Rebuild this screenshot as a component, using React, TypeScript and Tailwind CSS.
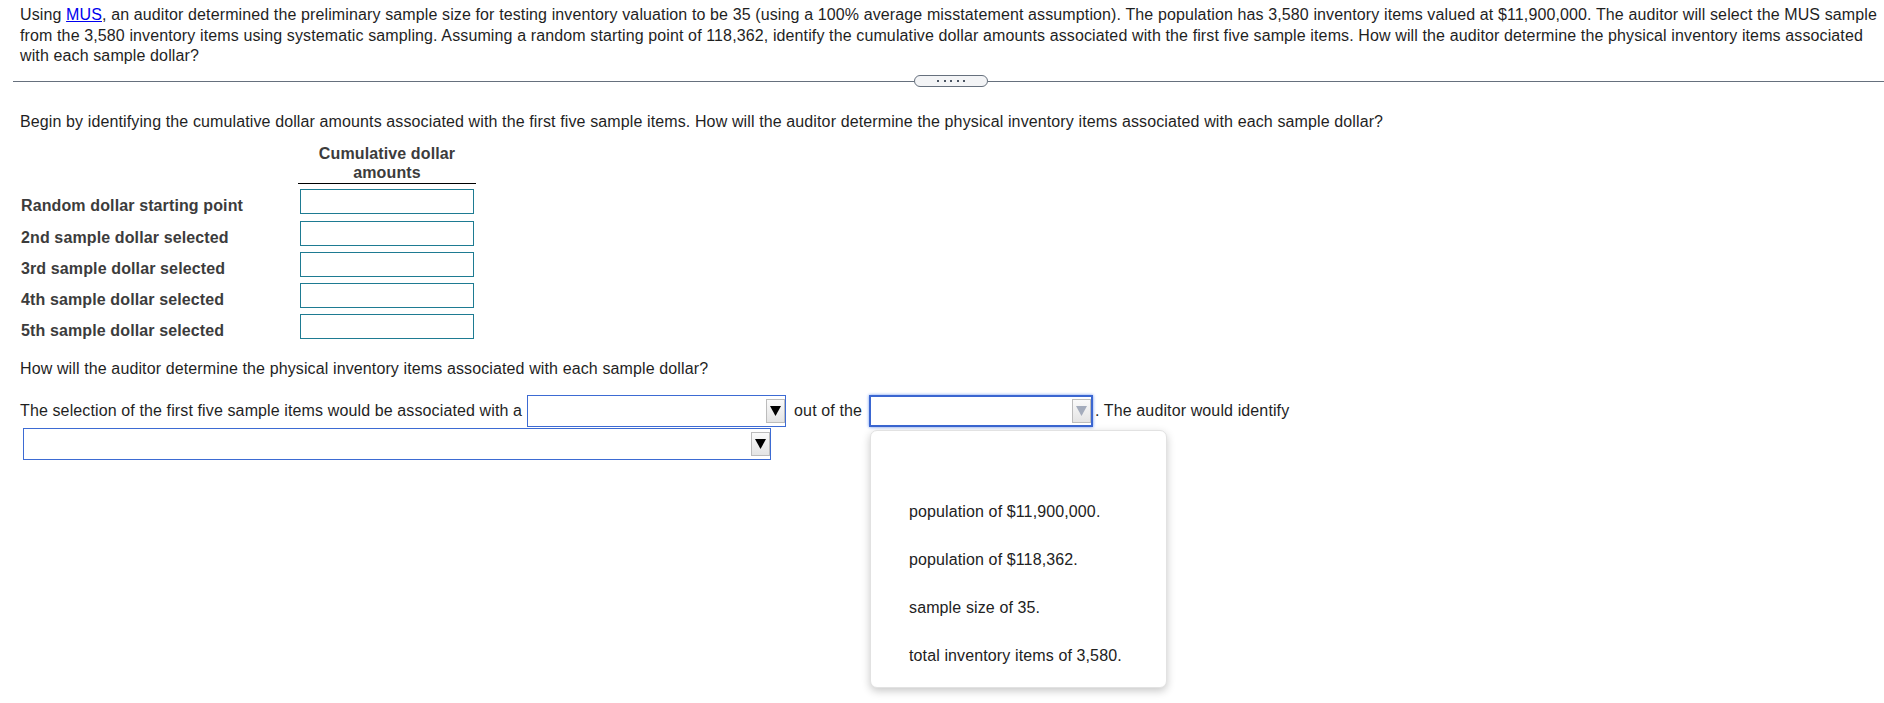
import type { ReactNode } from 'react';

const labels = [
  'Random dollar starting point',
  '2nd sample dollar selected',
  '3rd sample dollar selected',
  '4th sample dollar selected',
  '5th sample dollar selected',
];

const options = [
  'population of $11,900,000.',
  'population of $118,362.',
  'sample size of 35.',
  'total inventory items of 3,580.',
];

function Arrow({ muted = false }: { muted?: boolean }) {
  return (
    <div className="flex h-[24px] w-[19px] items-center justify-center border border-[#bcbcbc] bg-gradient-to-b from-[#fafafa] to-[#e4e4e4]">
      <svg width="11" height="10" viewBox="0 0 11 10">
        <polygon points="0,0 11,0 5.5,10" fill={muted ? '#a4acbc' : '#000'} />
      </svg>
    </div>
  );
}

function Select({ width, focused = false, children }: { width: string; focused?: boolean; children?: ReactNode }) {
  return (
    <div className="relative">
      <div
        className={`flex h-[32px] items-center justify-end bg-white ${width} ${
          focused
            ? 'border-2 border-[#3a66d1] shadow-[0_0_3px_#6b93ee]'
            : 'border border-[#3d6bd3]'
        }`}
      >
        <Arrow muted={focused} />
      </div>
      {children}
    </div>
  );
}

export default function App() {
  return (
    <div className="min-h-[703px] bg-white pr-[4px] pl-[20px] font-['Liberation_Sans',Arial,sans-serif] text-[16px] tracking-[0.12px] text-[#1f1f1f]">
      <p className="pt-[5px] leading-[20.5px]">
        Using <span className="text-[#0000ee] underline">MUS</span>, an auditor determined the preliminary sample
        size for testing inventory valuation to be 35 (using a 100% average misstatement assumption). The population
        has 3,580 inventory items valued at $11,900,000. The auditor will select the MUS sample from the 3,580
        inventory items using systematic sampling. Assuming a random starting point of 118,362, identify the
        cumulative dollar amounts associated with the first five sample items. How will the auditor determine the
        physical inventory items associated with each sample dollar?
      </p>

      <div className="mt-[8.5px] -mr-[4px] ml-[-7px] flex h-[12px] items-center">
        <div className="h-px w-[901px] bg-[#66707d]" />
        <div className="flex h-[12px] w-[74px] items-center justify-center gap-[4.5px] rounded-full border border-[#66707d] bg-[#f3f4f6]">
          <span className="h-[2px] w-[2px] bg-[#4b5563]" />
          <span className="h-[2px] w-[2px] bg-[#4b5563]" />
          <span className="h-[2px] w-[2px] bg-[#4b5563]" />
          <span className="h-[2px] w-[2px] bg-[#4b5563]" />
          <span className="h-[2px] w-[2px] bg-[#4b5563]" />
        </div>
        <div className="h-px flex-1 bg-[#66707d]" />
      </div>

      <p className="mt-[25px] leading-[20.5px]">
        Begin by identifying the cumulative dollar amounts associated with the first five sample items. How will the
        auditor determine the physical inventory items associated with each sample dollar?
      </p>

      <div className="mt-[11px] ml-[278px] w-[178px] border-b border-black pb-[1px] text-center font-bold leading-[19.4px] text-[#3c3c3c]">
        Cumulative dollar
        <br />
        amounts
      </div>

      <div className="mt-[5px] flex flex-col">
        {labels.map(label => (
          <div key={label} className="flex h-[31.2px] items-start">
            <div className="mt-[7px] w-[280px] pl-[1px] font-bold leading-[20px] text-[#3c3c3c]">{label}</div>
            <div className="h-[25px] w-[174px] border border-[#1e7b92] bg-white" />
          </div>
        ))}
      </div>

      <p className="mt-[14px] leading-[20.5px]">
        How will the auditor determine the physical inventory items associated with each sample dollar?
      </p>

      <div className="mt-[15px] flex h-[32px] items-center leading-[20.5px]">
        <span>The selection of the first five sample items would be associated with a</span>
        <div className="ml-[5px]">
          <Select width="w-[259px]" />
        </div>
        <span className="mr-[7px] ml-[8px]">out of the</span>
        <Select width="w-[224px]" focused>
          <div className="absolute top-full left-[1px] z-10 mt-[3px] w-[297px] rounded-[7px] border border-[#e2e2e2] bg-white pt-[9px] pb-[7px] shadow-[0_3px_8px_rgba(0,0,0,0.22)]">
            <div className="h-[48px]" />
            {options.map(opt => (
              <div key={opt} className="flex h-[48px] items-center pl-[38px] text-[#222]">
                {opt}
              </div>
            ))}
          </div>
        </Select>
        <span className="ml-[2px]">. The auditor would identify</span>
      </div>

      <div className="mt-[1px] ml-[3px]">
        <Select width="w-[748px]" />
      </div>
    </div>
  );
}
